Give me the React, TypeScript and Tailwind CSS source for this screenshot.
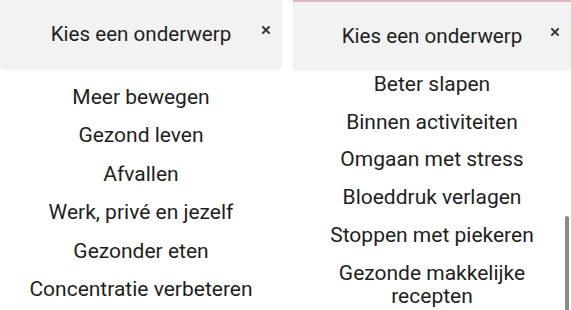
import React from 'react';

const leftTopics = [
    'Meer bewegen',
    'Gezond leven',
    'Afvallen',
    'Werk, privé en jezelf',
    'Gezonder eten',
    'Concentratie verbeteren',
];

const rightTopics = [
    'Beter slapen',
    'Binnen activiteiten',
    'Omgaan met stress',
    'Bloeddruk verlagen',
    'Stoppen met piekeren',
    'Gezonde makkelijke recepten',
];

function CloseIcon() {
    return (
        <svg width="8" height="8" viewBox="0 0 8 8" className="text-[#3a3a3a]">
            <path d="M1 1 L7 7 M7 1 L1 7" stroke="currentColor" strokeWidth="2" strokeLinecap="square" />
        </svg>
    );
}

function Header({ height }: { height: string }) {
    return (
        <div className={`relative flex items-center justify-center bg-[#f2f2f2] rounded-b-[4px] shadow-[0_1px_2px_rgba(0,0,0,0.06)] shrink-0 ${height}`}>
            <span className="text-[20.6px] leading-none text-[#1e1e1e]">Kies een onderwerp</span>
            <button className="absolute right-[12px] top-[26px] p-0">
                <CloseIcon />
            </button>
        </div>
    );
}

export default function App() {
    return (
        <div className="flex w-[571px] h-[310px] overflow-hidden bg-white font-['Roboto',sans-serif] gap-[11px]">
            <div className="flex flex-col w-[282px] shrink-0">
                <Header height="h-[69px]" />
                <ul className="flex flex-col pt-[9px]">
                    {leftTopics.map((topic) => (
                        <li key={topic} className="py-[7px] text-center text-[21px] leading-[24.4px] text-[#1e1e1e]">
                            {topic}
                        </li>
                    ))}
                </ul>
            </div>

            <div className="relative flex flex-col flex-1 min-w-0 border-t-2 border-[#e2b6bc]">
                <Header height="h-[68px]" />
                <div className="flex-1 min-h-0 overflow-hidden">
                    <ul className="flex flex-col -mt-[4px]">
                        {rightTopics.map((topic) => (
                            <li key={topic} className="py-[7px] px-[24px] text-center text-[21px] leading-[23.7px] text-[#1e1e1e]">
                                {topic}
                            </li>
                        ))}
                    </ul>
                </div>
                <div className="absolute right-[2px] top-[214px] w-[4px] h-[100px] rounded-full bg-[#8a8a8a]" />
            </div>
        </div>
    );
}
